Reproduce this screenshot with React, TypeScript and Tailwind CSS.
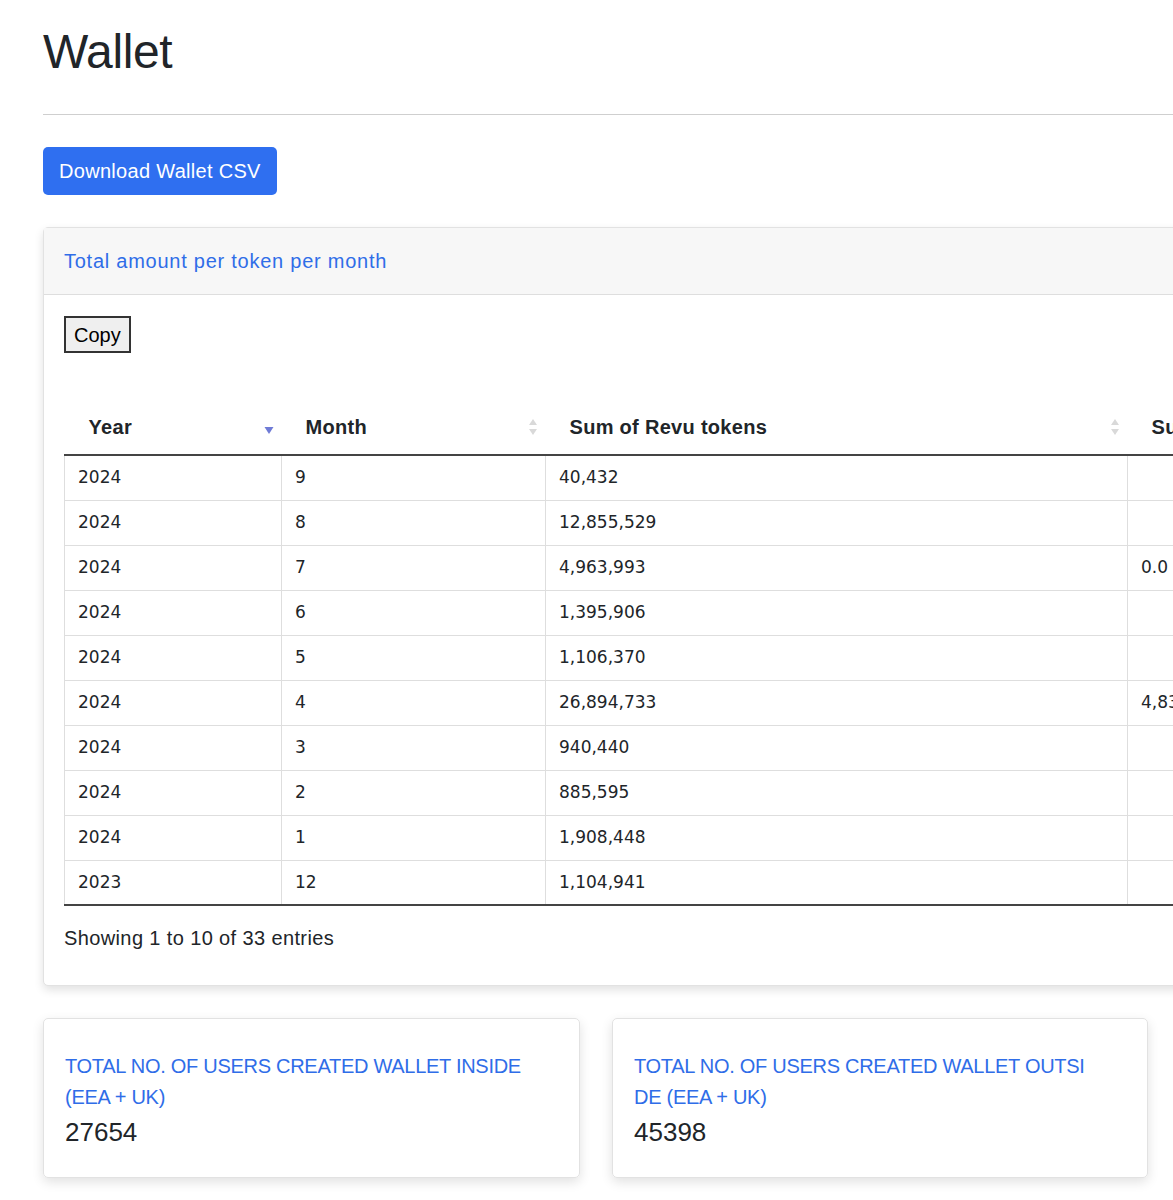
const rows = [
  ["2024", "9", "40,432", ""],
  ["2024", "8", "12,855,529", ""],
  ["2024", "7", "4,963,993", "0.0"],
  ["2024", "6", "1,395,906", ""],
  ["2024", "5", "1,106,370", ""],
  ["2024", "4", "26,894,733", "4,83"],
  ["2024", "3", "940,440", ""],
  ["2024", "2", "885,595", ""],
  ["2024", "1", "1,908,448", ""],
  ["2023", "12", "1,104,941", ""],
];

function SortBoth() {
  return (
    <svg width="10" height="18" viewBox="0 0 10 18" className="shrink-0">
      <path d="M5 1 L9 7 L1 7 Z" fill="#d9d9d9" />
      <path d="M5 17 L9 11 L1 11 Z" fill="#d9d9d9" />
    </svg>
  );
}

function SortDown() {
  return (
    <svg width="10" height="18" viewBox="0 0 10 18" className="shrink-0">
      <path d="M5 16 L9.5 9 L0.5 9 Z" fill="#6f7bd6" />
    </svg>
  );
}

export default function App() {
  return (
    <div className="h-[1200px] w-[1173px] overflow-hidden bg-white font-['Liberation_Sans',Arial,sans-serif] text-[#212529]">
      <div className="w-[1240px] pl-[43px] pt-[22px]">
        {/* Title */}
        <h1 className="text-[48px] leading-[60px] font-normal tracking-[-0.4px]">
          Wallet
        </h1>
        <div className="mt-[32px] border-t border-[#cfcfcf]" />

        <button className="mt-[32px] h-[48px] rounded-[5px] bg-[#2f6ff0] px-[16px] text-[20px] tracking-[0.3px] text-white">
          Download Wallet CSV
        </button>

        {/* Table card */}
        <div className="mt-[32px] rounded-[5px] border border-[#e2e2e2] bg-white shadow-[0_4px_10px_rgba(0,0,0,0.12)]">
          <div className="flex h-[67px] items-center border-b border-[#dedede] bg-[#f7f7f7] px-[20px]">
            <span className="text-[20px] tracking-[0.75px] text-[#2f6de8]">
              Total amount per token per month
            </span>
          </div>
          <div className="px-[20px] pt-[21px] pb-[32px]">
            <button className="h-[37px] border-2 border-[#333] bg-[#efefef] px-[8px] text-[20px] text-black">
              Copy
            </button>

            <table className="mt-[47px] w-[1300px] table-fixed border-collapse">
              <colgroup>
                <col className="w-[217px]" />
                <col className="w-[264px]" />
                <col className="w-[582px]" />
                <col className="w-[237px]" />
              </colgroup>
              <thead>
                <tr className="h-[55px] border-b-2 border-[#444]">
                  {[
                    ["Year", <SortDown key="d" />],
                    ["Month", <SortBoth key="m" />],
                    ["Sum of Revu tokens", <SortBoth key="s" />],
                    ["Sum of Revu points", null],
                  ].map(([label, icon], i) => (
                    <th key={i} className="pr-[8px] pl-[24px] text-left">
                      <div className="flex items-center justify-between">
                        <span className="whitespace-nowrap text-[20px] font-bold tracking-[0.3px]">
                          {label}
                        </span>
                        {icon}
                      </div>
                    </th>
                  ))}
                </tr>
              </thead>
              <tbody className="font-['DejaVu_Sans',Verdana,sans-serif] text-[17px]">
                {rows.map((r, i) => (
                  <tr
                    key={i}
                    className={
                      i === rows.length - 1
                        ? "h-[45px] border-b-2 border-[#444]"
                        : "h-[45px] border-b border-[#dedede]"
                    }
                  >
                    {r.map((c, j) => (
                      <td
                        key={j}
                        className="border-l border-[#dedede] px-[13px] whitespace-nowrap"
                      >
                        {c}
                      </td>
                    ))}
                  </tr>
                ))}
              </tbody>
            </table>

            <p className="mt-[17px] text-[20px] tracking-[0.38px]">
              Showing 1 to 10 of 33 entries
            </p>
          </div>
        </div>

        {/* Stat cards */}
        <div className="mt-[32px] flex gap-[32px]">
          <div className="w-[537px] rounded-[5px] border border-[#e2e2e2] px-[21px] pt-[32px] pb-[28px] shadow-[0_4px_12px_rgba(0,0,0,0.12)]">
            <p className="text-[20px] leading-[31px] tracking-[-0.28px] text-[#2f6de8]">
              TOTAL NO. OF USERS CREATED WALLET INSIDE
              <br />
              (EEA + UK)
            </p>
            <p className="mt-[2px] text-[26px] leading-[34px] font-medium">27654</p>
          </div>
          <div className="w-[536px] rounded-[5px] border border-[#e2e2e2] px-[21px] pt-[32px] pb-[28px] shadow-[0_4px_12px_rgba(0,0,0,0.12)]">
            <p className="text-[20px] leading-[31px] tracking-[-0.28px] text-[#2f6de8]">
              TOTAL NO. OF USERS CREATED WALLET OUTSI
              <br />
              DE (EEA + UK)
            </p>
            <p className="mt-[2px] text-[26px] leading-[34px] font-medium">45398</p>
          </div>
        </div>
      </div>
    </div>
  );
}
